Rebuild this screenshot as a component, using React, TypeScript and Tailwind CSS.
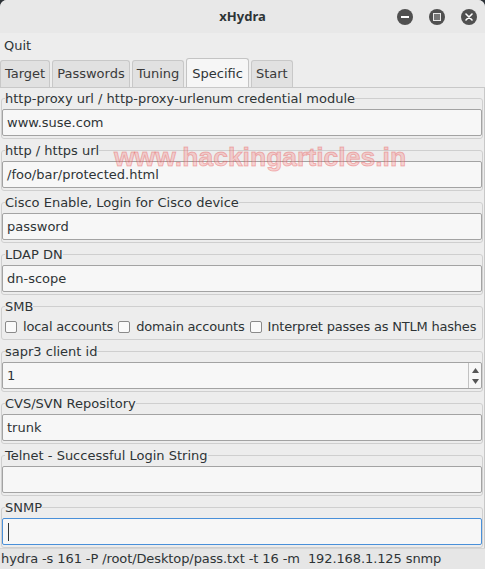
import React from "react";

const font = "font-['DejaVu_Sans',sans-serif]";

function Field({ label, value = "", focused = false, spin = false }: { label: string; value?: string; focused?: boolean; spin?: boolean }) {
  return (
    <fieldset className="border border-[#cfcfcf] rounded-[3px] pb-[2px] min-w-0">
      <legend className="ml-[3px] leading-[15px] text-[13px]">{label}</legend>
      <div
        className={`mt-[3px] h-[27px] flex items-stretch rounded-[2px] bg-[#f7f7f7] border ${
          focused ? "border-[#4a90d9]" : "border-[#a3a3a3]"
        }`}
      >
        <div className="flex-1 flex items-center pl-[4px] text-[13px] text-[#2e3436] relative">
          {focused ? <span className="block w-[1px] h-[18px] bg-[#2e3436] ml-[1px]" /> : value}
        </div>
        {spin && (
          <div className="w-[13px] border-l border-[#c2c2c2] flex flex-col items-center justify-center gap-[6px]">
            <svg width="7" height="5" viewBox="0 0 7 5"><path d="M3.5 0 L7 5 L0 5 Z" fill="#555" /></svg>
            <svg width="7" height="5" viewBox="0 0 7 5"><path d="M0 0 L7 0 L3.5 5 Z" fill="#555" /></svg>
          </div>
        )}
      </div>
    </fieldset>
  );
}

function Check({ label }: { label: string }) {
  return (
    <div className="flex items-center gap-[6px]">
      <span className="block w-[12px] h-[12px] rounded-[2px] border border-[#8a8a8a] bg-[#fafafa]" />
      <span>{label}</span>
    </div>
  );
}

export default function App() {
  return (
    <div className={`w-[485px] h-[569px] bg-[#2e3338] overflow-hidden ${font} text-[13px] text-[#2e3436]`}>
      <div className="relative flex flex-col h-full rounded-t-[7px] bg-[#ededed] overflow-hidden">
        {/* title bar */}
        <div className="relative h-[33px] flex items-center justify-center bg-[#e8e8e8]">
          <span className="font-['Noto_Sans',sans-serif] font-bold text-[13px] text-[#2e3436]">xHydra</span>
          <div className="absolute right-[8px] top-[9px] flex gap-[16px]">
            <span className="w-[16px] h-[16px] rounded-full bg-[#505050] flex items-center justify-center">
              <span className="block w-[8px] h-[2px] bg-white" />
            </span>
            <span className="w-[16px] h-[16px] rounded-full bg-[#505050] flex items-center justify-center">
              <span className="block w-[8px] h-[8px] border-[1.5px] border-[#e8e8e8] bg-[#777]" />
            </span>
            <span className="w-[16px] h-[16px] rounded-full bg-[#505050] flex items-center justify-center">
              <svg width="8" height="8" viewBox="0 0 8 8"><path d="M1 1 L7 7 M7 1 L1 7" stroke="white" strokeWidth="1.6" strokeLinecap="round" /></svg>
            </span>
          </div>
        </div>
        {/* menu */}
        <div className="h-[26px] flex items-center px-[4px] pb-[1px]">Quit</div>
        {/* tabs */}
        <div className="h-[28px] flex items-end gap-[2px]">
          {["Target", "Passwords", "Tuning", "Specific", "Start"].map((t) =>
            t === "Specific" ? (
              <div key={t} className="h-[30px] px-[5px] flex items-center bg-[#f6f6f6] border border-b-0 border-[#c4c4c4] rounded-t-[3px] mb-[-1px] relative">
                {t}
              </div>
            ) : (
              <div key={t} className="h-[27px] px-[4px] flex items-center bg-[#e1e1e1] border border-b-0 border-[#c8c8c8] rounded-t-[3px] text-[#3a3a3a]">
                {t}
              </div>
            )
          )}
        </div>
        {/* panel */}
        <div className="relative flex-1 border-t border-r border-[#c8c8c8] flex flex-col gap-[4px] pt-[3px] pl-[1px] pr-[1px]">
          <Field label="http-proxy url / http-proxy-urlenum credential module" value="www.suse.com" />
          <Field label="http / https url" value="/foo/bar/protected.html" />
          <Field label="Cisco Enable, Login for Cisco device" value="password" />
          <Field label="LDAP DN" value="dn-scope" />
          <fieldset className="border border-[#cfcfcf] rounded-[3px] pb-[1px] min-w-0">
            <legend className="ml-[3px] leading-[15px]">SMB</legend>
            <div className="mt-[2px] h-[22px] flex items-center gap-[5px] pl-[3px] whitespace-nowrap tracking-[-0.2px]">
              <Check label="local accounts" />
              <Check label="domain accounts" />
              <Check label="Interpret passes as NTLM hashes" />
            </div>
          </fieldset>
          <Field label="sapr3 client id" value="1" spin />
          <Field label="CVS/SVN Repository" value="trunk" />
          <Field label="Telnet - Successful Login String" />
          <Field label="SNMP" focused />
          <div className="absolute left-[114px] top-[54px] font-['Liberation_Sans',sans-serif] font-bold text-[26.5px] leading-[30px] text-[rgba(244,140,140,0.35)] [-webkit-text-stroke:1px_rgba(230,60,60,0.32)] pointer-events-none whitespace-nowrap">
            www.hackingarticles.in
          </div>
        </div>
        {/* status bar */}
        <div className="h-[21px] flex items-center border-t border-[#d6d6d6] bg-[#e6e6e6] pl-[1px] whitespace-nowrap relative tracking-[-0.1px]">
          hydra -s 161 -P /root/Desktop/pass.txt -t 16 -m &nbsp;192.168.1.125 snmp
        </div>
      </div>
    </div>
  );
}
